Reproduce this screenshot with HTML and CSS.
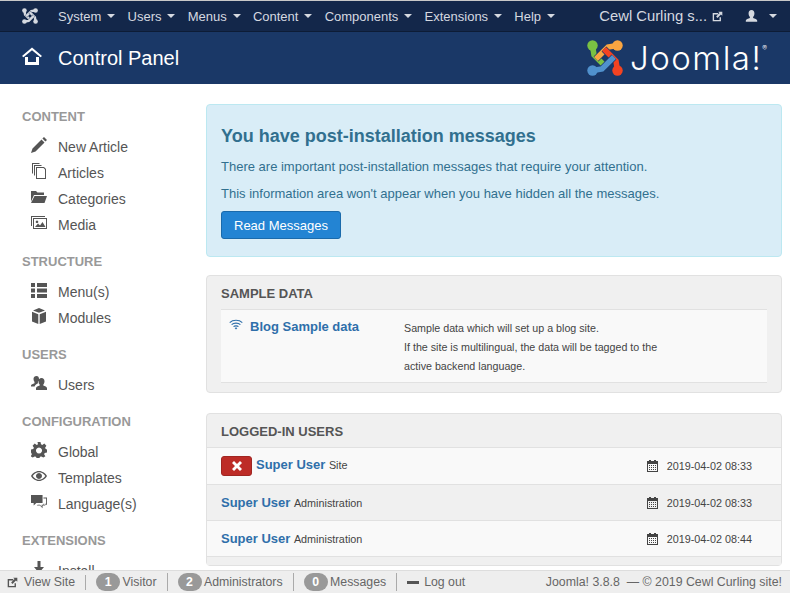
FILE: index.html
```html
<!DOCTYPE html>
<html lang="en">
<head>
  <meta charset="UTF-8">
  <meta name="viewport" content="width=device-width, initial-scale=1.0">
  <title>Control Panel</title>
  <link rel="stylesheet" href="styles.css">
</head>
<body>

  <svg class="sprite" xmlns="http://www.w3.org/2000/svg">
    <symbol id="i-ext" viewBox="0 0 16 16"><path d="M1 3h8v2H3v8h8V9h2v6H1zM9 1h6v6l-2-2-5 5-2-2 5-5z"/></symbol>
    <symbol id="i-user" viewBox="0 0 16 16"><path d="M8 0c2.400 0 3.600 1.800 3.600 4.200 0 1.700-.7 3.300-1.600 4.300v1.300c2 .7 5 1.600 5 3.200v1.500H1v-1.500c0-1.600 3-2.500 5-3.200V8.500C5.100 7.500 4.400 5.900 4.400 4.200 4.400 1.800 5.600 0 8 0z"/></symbol>
    <symbol id="i-pencil" viewBox="0 0 16 16"><path d="M13 0l3 3-1.600 1.600-3-3zM10.500 2.500l3 3L4.500 14.500 0 16l1.500-4.500z"/></symbol>
    <symbol id="i-copy" viewBox="0 0 16 16"><path fill-rule="evenodd" d="M1 0h7l1 1H2v10l-1-1zM3 2h7l1 1H4v10l-1-1zM5 4h8l2 2v10H5zM6 5v10h8V6.500L12.500 5z"/></symbol>
    <symbol id="i-folder" viewBox="0 0 16 16"><path d="M0 2h5l1.500 1.500H13V6H3L0 12.500zM3.500 7H16l-2.500 7H0z"/></symbol>
    <symbol id="i-media" viewBox="0 0 16 16"><path fill-rule="evenodd" d="M0 1h14v1H1v9H0zM2 3h14v11H2zM3 4v9h12V4z"/><path d="M4 12l3-3.500 2 2 2.500-3.500 3 5zM6 5.500a1.300 1.300 0 1 1-.01 0z"/></symbol>
    <symbol id="i-list" viewBox="0 0 16 16"><path d="M0 1h4v4H0zM6 1h10v4H6zM0 6.500h4v4H0zM6 6.500h10v4H6zM0 12h4v4H0zM6 12h10v4H6z"/></symbol>
    <symbol id="i-cube" viewBox="0 0 16 16"><path d="M8 0l6 2.400L8 4.800 2 2.400zM1 3.800l6.300 2.500V16L1 13.500zM15 3.800v9.700L8.700 16V6.300z"/></symbol>
    <symbol id="i-users" viewBox="0 0 16 16"><path d="M5.500 1C7.200 1 8 2.200 8 3.800c0 1.100-.5 2.300-1.100 3v.9l.7.4C6.500 8.800 4 9.600 3.600 11.500H0v-1c0-1.100 2.100-1.700 3.500-2.300v-1.400C2.900 6.100 2.500 4.900 2.500 3.800 2.500 2.200 3.800 1 5.500 1zM10.500 3c1.900 0 3 1.400 3 3.200 0 1.300-.5 2.500-1.200 3.300v1.100c1.600.6 3.700 1.200 3.700 2.600V15H5v-1.800c0-1.400 2.100-2 3.700-2.600V9.500C8 8.700 7.500 7.500 7.500 6.200 7.500 4.400 8.600 3 10.500 3z"/></symbol>
    <symbol id="i-cog" viewBox="0 0 16 16"><path fill-rule="evenodd" d="M6.500 0h3l.5 2.300 1.300.6 2-1.300 2.100 2.100-1.300 2 .6 1.300L16 7.500v3l-2.300.5-.6 1.300 1.300 2-2.100 1.200-2-1.100-1.300.3-.5 1.300h-3l-.5-1.300-1.300-.3-2 1.100-2.100-1.200 1.300-2-.6-1.300L0 10.500v-3l2.300-.5.600-1.300-1.300-2 2.100-2.100 2 1.300L7 2.300zM8 5.600a3 3 0 1 0 .01 0z"/></symbol>
    <symbol id="i-eye" viewBox="0 0 16 16"><path fill-rule="evenodd" d="M8 3c3.600 0 6.500 2.400 8 5-1.500 2.600-4.400 5-8 5s-6.500-2.400-8-5c1.500-2.600 4.400-5 8-5zM8 4.200c-2.600 0-4.800 1.600-6.300 3.800C3.200 10.200 5.400 11.800 8 11.800s4.800-1.600 6.300-3.800C12.800 5.800 10.600 4.200 8 4.200zM8 5a3 3 0 1 1-.01 0z"/></symbol>
    <symbol id="i-chat" viewBox="0 0 18 16"><path d="M0 0h13v9H6l-3 3V9H0z"/><path fill-rule="evenodd" d="M14 3h4v8h-2v-1h1V4h-3zM14 10h1v1.500h1V12h-3v3l-3-3H6.500l1-1H10l2 2v-2h2z"/></symbol>
    <symbol id="i-install" viewBox="0 0 16 16"><path d="M6.500 0h3v6H13l-5 6-5-6h3.500zM1 13h14v3H1z"/></symbol>
    <symbol id="i-wifi" viewBox="0 0 16 12"><path fill="none" stroke="currentColor" stroke-width="1.300" d="M.8 3.800C4.500.3 11.500.3 15.200 3.800M3 6.200C5.500 3.800 10.500 3.800 13 6.200M5.200 8.400C6.500 7.200 9.500 7.200 10.800 8.400"/><path d="M8 9l1.500 1.300L8 11.600 6.500 10.300z"/></symbol>
    <symbol id="i-calendar" viewBox="0 0 11 12"><path d="M0 1h2V0h2v1h3V0h2v1h2v3H0zM0 4h1v7h9V4h1v8H0z"/><path d="M2 5h1v1H2zM4 5h1v1H4zM6 5h1v1H6zM8 5h1v1H8zM2 7h1v1H2zM4 7h1v1H4zM6 7h1v1H6zM8 7h1v1H8zM2 9h1v1H2zM4 9h1v1H4zM6 9h1v1H6zM8 9h1v1H8z"/></symbol>
    <symbol id="i-joomla" viewBox="0 0 36 36">
      <path d="M5.500 5.500L7 15l12 12" fill="none" stroke="var(--gap)" stroke-width="6.800"/>
      <path d="M5.500 5.500L7 15l12 12" fill="none" stroke="currentColor" stroke-width="5.500"/>
      <circle cx="5.500" cy="5.500" r="5.200" fill="currentColor"/>
    </symbol>
  </svg>

  <nav class="navbar">
    <svg class="nav-logo" viewBox="0 0 36 36">
      <use href="#i-joomla"/>
      <use href="#i-joomla" transform="rotate(90 18 18)"/>
      <use href="#i-joomla" transform="rotate(180 18 18)"/>
      <use href="#i-joomla" transform="rotate(270 18 18)"/>
    </svg>
    <ul class="nav-menu">
      <li>System<span class="caret"></span></li>
      <li>Users<span class="caret"></span></li>
      <li>Menus<span class="caret"></span></li>
      <li>Content<span class="caret"></span></li>
      <li>Components<span class="caret"></span></li>
      <li>Extensions<span class="caret"></span></li>
      <li>Help<span class="caret"></span></li>
    </ul>
    <div class="nav-right">
      <span class="site-name">Cewl Curling s...</span>
      <svg class="nav-ext"><use href="#i-ext"/></svg>
      <svg class="nav-user"><use href="#i-user"/></svg>
      <span class="caret"></span>
    </div>
  </nav>

  <header class="subhead">
    <svg class="home-icon" viewBox="0 0 20 18">
      <path d="M10 .5L20 9l-1.500 1.300L10 3.200 1.500 10.300 0 9z"/>
      <path d="M3 10h3v5h8v-5h3v8H3z"/>
    </svg>
    <h1>Control Panel</h1>
    <div class="brand">
      <svg class="brand-mark" viewBox="0 0 36 36">
        <use href="#i-joomla" color="#7ac143"/>
        <use href="#i-joomla" color="#f9a541" transform="rotate(90 18 18)"/>
        <use href="#i-joomla" color="#f44321" transform="rotate(180 18 18)"/>
        <use href="#i-joomla" color="#5091cd" transform="rotate(270 18 18)"/>
      </svg>
      <span class="brand-name">Joomla!<sup>®</sup></span>
    </div>
  </header>

  <div class="page">
    <aside class="sidebar">
      <h4>Content</h4>
      <ul>
        <li><svg><use href="#i-pencil"/></svg>New Article</li>
        <li><svg><use href="#i-copy"/></svg>Articles</li>
        <li><svg><use href="#i-folder"/></svg>Categories</li>
        <li><svg><use href="#i-media"/></svg>Media</li>
      </ul>
      <h4>Structure</h4>
      <ul>
        <li><svg><use href="#i-list"/></svg>Menu(s)</li>
        <li><svg><use href="#i-cube"/></svg>Modules</li>
      </ul>
      <h4>Users</h4>
      <ul>
        <li><svg><use href="#i-users"/></svg>Users</li>
      </ul>
      <h4>Configuration</h4>
      <ul>
        <li><svg><use href="#i-cog"/></svg>Global</li>
        <li><svg><use href="#i-eye"/></svg>Templates</li>
        <li><svg><use href="#i-chat"/></svg>Language(s)</li>
      </ul>
      <h4>Extensions</h4>
      <ul>
        <li><svg><use href="#i-install"/></svg>Install</li>
      </ul>
    </aside>

    <main class="main">
      <section class="alert">
        <h2>You have post-installation messages</h2>
        <p>There are important post-installation messages that require your attention.</p>
        <p>This information area won't appear when you have hidden all the messages.</p>
        <button class="btn-primary" type="button">Read Messages</button>
      </section>

      <section class="well">
        <h3>Sample Data</h3>
        <div class="sample-row">
          <a class="sample-link"><svg><use href="#i-wifi"/></svg>Blog Sample data</a>
          <p>Sample data which will set up a blog site.<br>If the site is multilingual, the data will be tagged to the<br>active backend language.</p>
        </div>
      </section>

      <section class="well well-users">
        <h3>Logged-in Users</h3>
        <div class="user-row user-row-first">
          <span class="user-name"><button class="btn-logout" type="button"><svg viewBox="0 0 10 10"><path d="M2 0l3 3 3-3 2 2-3 3 3 3-2 2-3-3-3 3-2-2 3-3-3-3z"/></svg></button><a>Super User</a><small>Site</small></span>
          <span class="user-date"><svg><use href="#i-calendar"/></svg>2019-04-02 08:33</span>
        </div>
        <div class="user-row">
          <span class="user-name"><a>Super User</a><small>Administration</small></span>
          <span class="user-date"><svg><use href="#i-calendar"/></svg>2019-04-02 08:33</span>
        </div>
        <div class="user-row">
          <span class="user-name"><a>Super User</a><small>Administration</small></span>
          <span class="user-date"><svg><use href="#i-calendar"/></svg>2019-04-02 08:44</span>
        </div>
        <div class="user-row user-row-end"></div>
      </section>
    </main>
  </div>

  <footer class="status">
    <div class="status-left">
      <span><svg class="status-ext"><use href="#i-ext"/></svg>View Site</span>
      <span><b>1</b>Visitor</span>
      <span><b>2</b>Administrators</span>
      <span><b>0</b>Messages</span>
      <span><i class="minus"></i>Log out</span>
    </div>
    <div class="status-right">Joomla! 3.8.8 &nbsp;— © 2019 Cewl Curling site!</div>
  </footer>

</body>
</html>
```

FILE: styles.css
```css
html,
body {
  height: 100%;
}

body {
  display: flex;
  flex-direction: column;
  margin: 0;
  overflow: hidden;
  font-family: "Liberation Sans", Arial, sans-serif;
  font-size: 13px;
  color: #555;
  background-color: #fff;
}

ul {
  margin: 0;
  padding: 0;
  list-style: none;
}

.sprite {
  display: none;
}

.navbar {
  display: flex;
  flex: none;
  align-items: center;
  height: 30px;
  padding-left: 22px;
  color: #d5d9e0;
  background-color: #13274a;
  border-top: 1px solid #c8c8c8;
  border-bottom: 1px solid #0d1c36;
}

.nav-logo {
  --gap: #13274a;
  width: 16px;
  height: 16px;
}

.nav-menu {
  display: flex;
  margin-left: 20px;
}

.nav-menu li {
  display: flex;
  align-items: center;
  margin-right: 12.2px;
}

.caret {
  width: 0;
  height: 0;
  margin-left: 6px;
  border-top: 4px solid currentColor;
  border-right: 4px solid transparent;
  border-left: 4px solid transparent;
}

.nav-right {
  display: flex;
  align-items: center;
  margin-left: auto;
  padding-right: 13px;
}

.site-name {
  font-size: 14.8px;
}

.nav-ext {
  width: 11px;
  height: 11px;
  margin-left: 5px;
  fill: currentColor;
}

.nav-user {
  width: 13px;
  height: 13px;
  margin-left: 22px;
  margin-right: 5px;
  fill: currentColor;
}

.subhead {
  display: flex;
  flex: none;
  align-items: center;
  height: 52px;
  padding-left: 22px;
  color: #fff;
  background-color: #1a3867;
}

.home-icon {
  width: 20px;
  height: 18px;
  margin-top: -4px;
  fill: #fff;
}

.subhead h1 {
  margin: 0 0 0 16px;
  font-size: 20px;
  font-weight: 400;
}

.brand {
  display: flex;
  align-items: center;
  margin-left: auto;
  padding-right: 23px;
}

.brand-mark {
  --gap: #1a3867;
  width: 36px;
  height: 36px;
}

.brand-name {
  margin-left: 7px;
  font-family: Inter, sans-serif;
  font-size: 33px;
  font-weight: 300;
  letter-spacing: 1.5px;
  line-height: 36px;
}

.brand-name sup {
  font-size: 7px;
  letter-spacing: 0;
  vertical-align: 19px;
  line-height: 0;
}

.page {
  display: flex;
  flex: 1;
  min-height: 0;
  overflow: hidden;
}

.sidebar {
  flex: none;
  width: 206px;
  padding: 23px 0 0 22px;
  box-sizing: border-box;
}

.sidebar h4 {
  margin: 0 0 7px;
  font-size: 13px;
  line-height: 20px;
  color: #999;
  text-transform: uppercase;
}

.sidebar ul {
  margin-bottom: 14px;
}

.sidebar li {
  display: flex;
  align-items: center;
  height: 26px;
  padding-left: 9px;
  font-size: 14px;
}

.sidebar li svg {
  flex: none;
  width: 16px;
  height: 16px;
  margin-top: -4px;
  margin-right: 11px;
  fill: #555;
}

.main {
  width: 576px;
  padding-top: 20px;
}

.alert {
  box-sizing: border-box;
  height: 153px;
  margin-bottom: 18px;
  padding: 21px 14px 0;
  color: #31708f;
  background-color: #d9edf7;
  border: 1px solid #bce8f1;
  border-radius: 4px;
}

.alert h2 {
  margin: 0 0 12px;
  font-size: 18px;
  line-height: 20px;
}

.alert p {
  margin: 0 0 9px;
  line-height: 18px;
}

.btn-primary {
  height: 28px;
  margin-top: -1px;
  padding: 0 12px;
  font-family: inherit;
  font-size: 13px;
  color: #fff;
  background-color: #2384d3;
  border: 1px solid #1a6aab;
  border-radius: 3px;
}

.well {
  margin-bottom: 20px;
  background-color: #f0f0f0;
  border: 1px solid #e1e1e1;
  border-radius: 4px;
}

.well h3 {
  margin: 0;
  padding: 9px 14px 0;
  height: 24px;
  font-size: 13px;
  line-height: 17px;
  color: #555;
  text-transform: uppercase;
}

.sample-row {
  display: flex;
  height: 74px;
  margin: 0 14px 9px;
  box-sizing: border-box;
  background-color: #f9f9f9;
  border-top: 1px solid #e1e1e1;
  border-bottom: 1px solid #e1e1e1;
}

.sample-link {
  display: flex;
  flex: none;
  width: 183px;
  padding: 9px 0 0 8px;
  box-sizing: border-box;
  font-weight: 700;
  color: #2f6faa;
}

.sample-link svg {
  width: 14px;
  height: 11px;
  margin-right: 7px;
  fill: currentColor;
}

.sample-row p {
  margin: 9px 0 0;
  font-size: 10.7px;
  line-height: 19px;
  color: #444;
}

.user-row {
  display: flex;
  align-items: center;
  justify-content: space-between;
  box-sizing: border-box;
  height: 36px;
  padding: 0 29px 0 14px;
  border-top: 1px solid #e1e1e1;
  background-color: #f9f9f9;
}

.user-row:nth-of-type(even) {
  background-color: #f0f0f0;
}

.user-row-first {
  height: 37px;
}

.user-row-end {
  height: 9px;
}

.user-name a {
  font-weight: 700;
  color: #2f6faa;
}

.user-name small {
  margin-left: 3.5px;
  font-size: 10.8px;
  color: #444;
}

.btn-logout {
  display: inline-flex;
  align-items: center;
  justify-content: center;
  width: 31px;
  height: 20px;
  margin-right: 4px;
  padding: 0;
  vertical-align: middle;
  background-color: #bd2c27;
  border: 1px solid #a02622;
  border-radius: 3px;
}

.btn-logout svg {
  width: 10px;
  height: 10px;
  fill: #fff;
}

.user-date {
  display: flex;
  align-items: center;
  font-size: 10.8px;
  color: #444;
}

.user-date svg {
  width: 11px;
  height: 12px;
  margin-right: 9px;
  fill: #444;
}

.status {
  display: flex;
  flex: none;
  align-items: center;
  justify-content: space-between;
  height: 22px;
  padding: 0 8px 0 7px;
  font-size: 12.35px;
  color: #666;
  background-color: #eee;
  border-top: 1px solid #ddd;
}

.status-left {
  display: flex;
  align-items: center;
  font-size: 12.3px;
}

.status-left span {
  display: flex;
  align-items: center;
  padding-right: 10px;
  margin-right: 10px;
  border-right: 1px solid #aaa;
  line-height: 15px;
}

.status-left span:last-child {
  border-right: 0;
}

.status-left b {
  width: 24px;
  margin-right: 2.5px;
  font-weight: 700;
  line-height: 18px;
  text-align: center;
  color: #fff;
  background-color: #999;
  border-radius: 10px;
}

.status-ext {
  width: 11px;
  height: 11px;
  margin-right: 6px;
  fill: #555;
}

.minus {
  width: 12px;
  height: 3px;
  margin-right: 5px;
  background-color: #555;
}
```
